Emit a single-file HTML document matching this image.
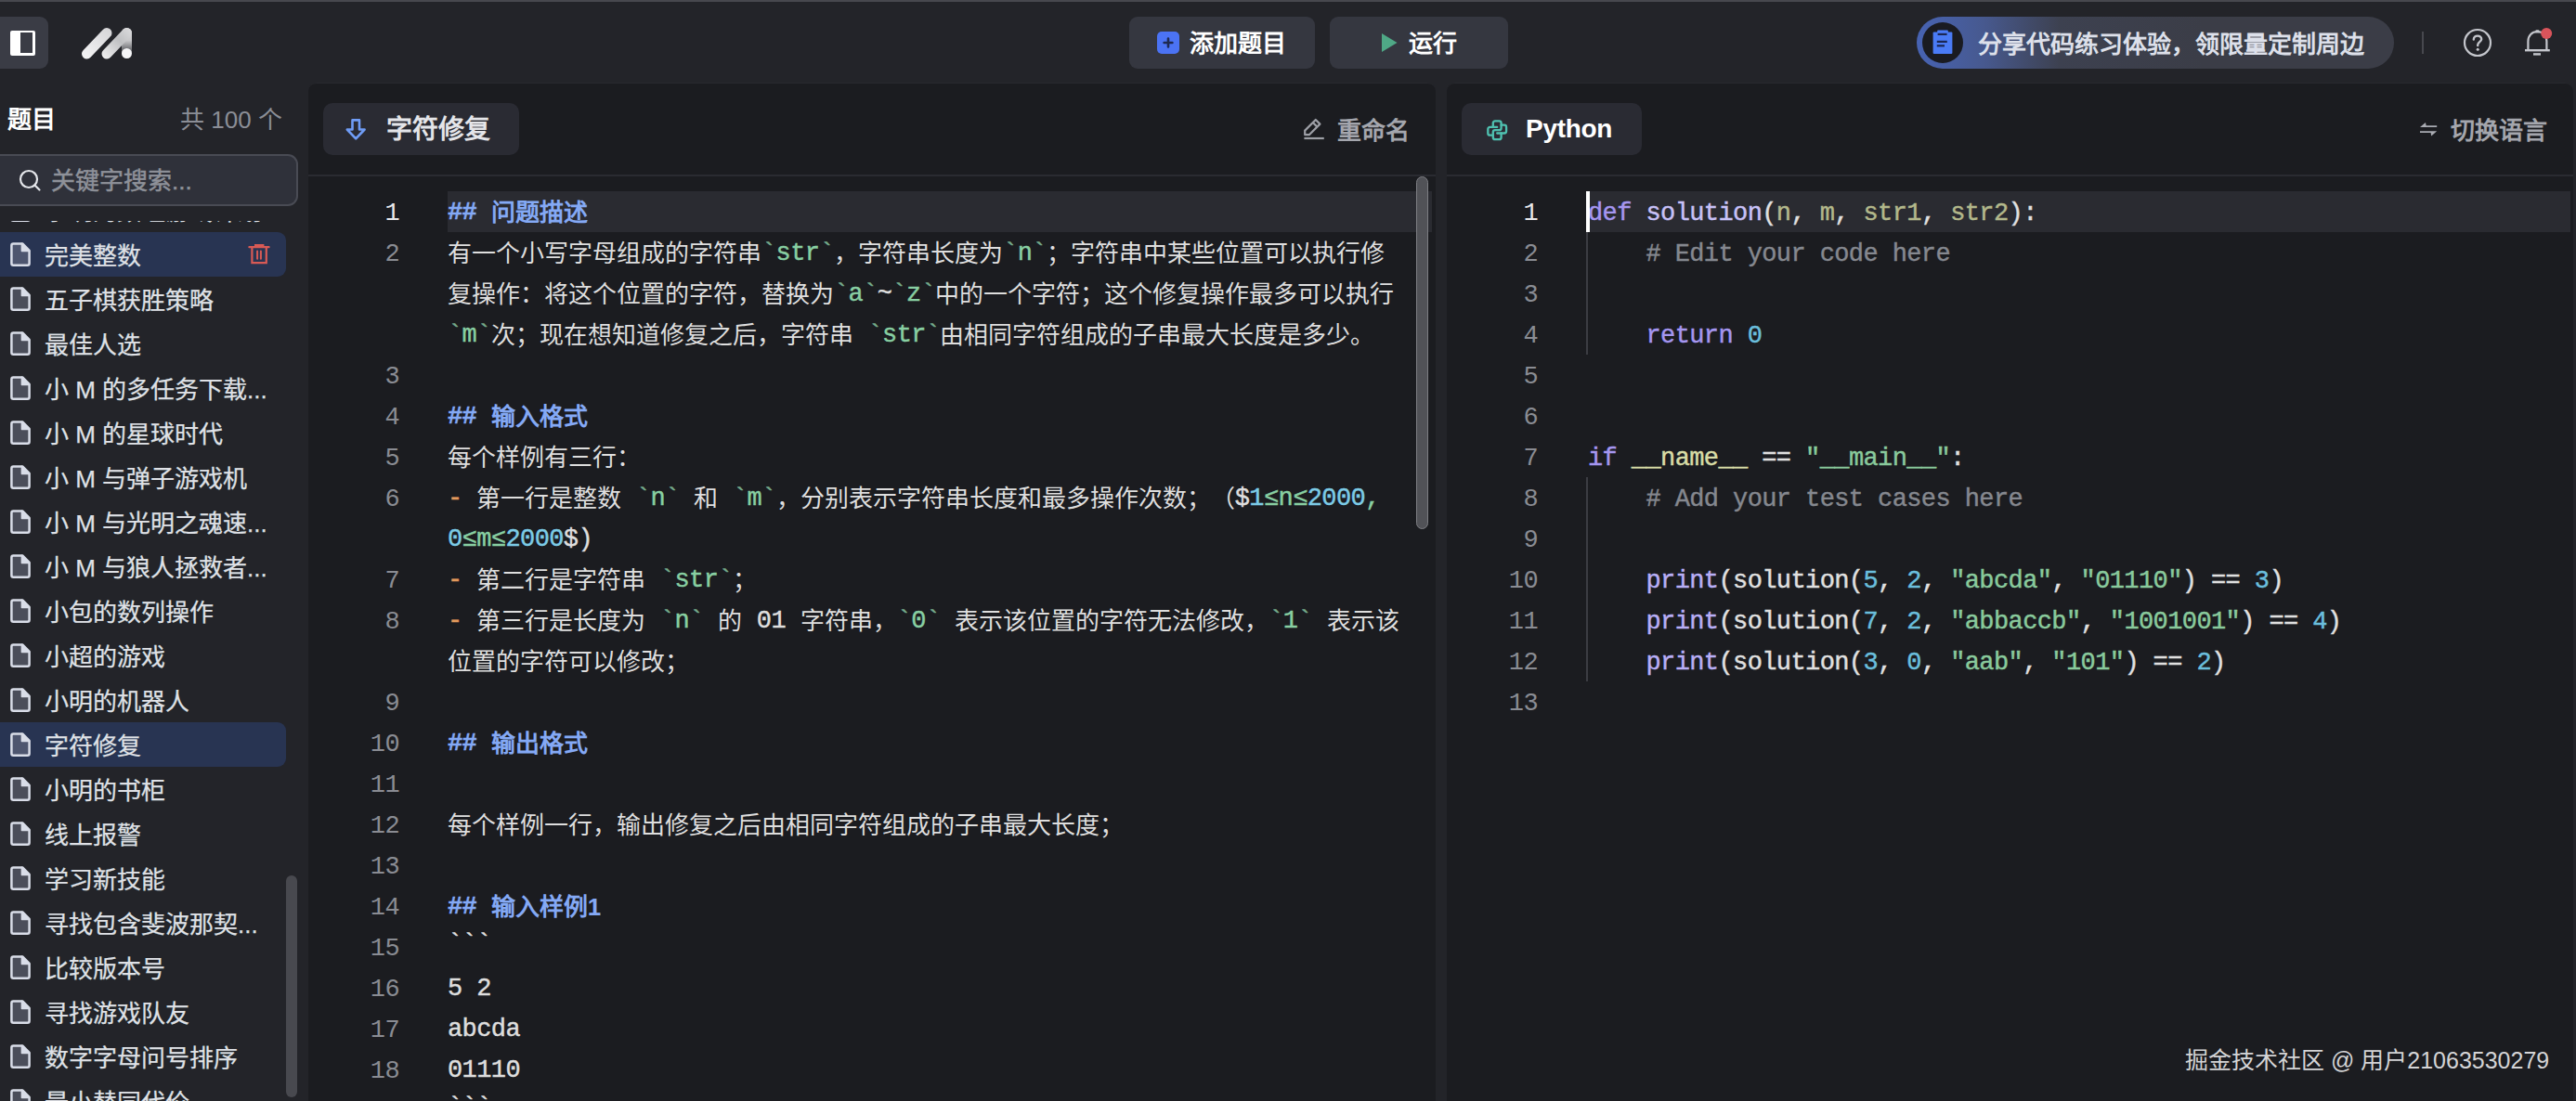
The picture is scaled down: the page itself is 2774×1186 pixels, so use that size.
<!DOCTYPE html>
<html lang="zh-CN"><head><meta charset="utf-8">
<style>
*{box-sizing:border-box;margin:0;padding:0}
html,body{width:2774px;height:1186px;overflow:hidden;background:#232429;font-family:"Liberation Sans",sans-serif;color:#e6e6e6;text-spacing-trim:space-all}
.a{position:absolute}
.topline{left:0;top:0;width:2774px;height:2px;background:#47484e}
.btn{background:#353740;border-radius:9px;height:56px;top:18px}
.btxt{font-size:26px;font-weight:700;color:#fff;line-height:56px;white-space:nowrap}
.panel{background:#1b1c20;top:89px;height:1100px;border-radius:9px 9px 0 0;border-top:1px solid #28292e}
.chip{background:#2a2b33;border-radius:10px;top:111px;height:56px}
.sep{height:2px;background:#2a2b31;top:188px}
.ln{font-family:"Liberation Mono",monospace;font-size:27px;letter-spacing:-0.6px;color:#8a8c93;text-align:right;line-height:44px;height:44px;padding-top:2px}
.row{line-height:44px;height:44px;white-space:pre;font-size:26px;color:#dedede;padding-top:1px}
.row .m{position:relative;top:-2px}
.row .m.fence{position:relative;top:-6px}
.m{font-family:"Liberation Mono",monospace;font-size:27px;letter-spacing:-0.6px;-webkit-text-stroke:0.45px currentColor}
.hd{color:#84a9f5;font-weight:700}
.cj{display:inline-block;white-space:pre}
.g{color:#88cfa2}
.bt{color:#74a98a}
.c{color:#7ccbe6}
.o{color:#e39a5c}
.item{left:0;width:308px;height:48px;line-height:48px;font-size:26px;color:#dfe1e6;white-space:nowrap}
.item .t{position:absolute;left:48px;top:2px;-webkit-text-stroke:0.25px currentColor}
.fi{position:absolute;left:11px;top:12px;width:22px;height:25px}
.code{font-family:"Liberation Mono",monospace;font-size:27px;letter-spacing:-0.6px;line-height:44px;height:44px;white-space:pre;color:#e0e0e0;padding-top:2px;-webkit-text-stroke:0.45px currentColor}
.kw{color:#a596f0}
.fn{color:#c8c1f7}
.pa{color:#b3b88b}
.cm{color:#85888f}
.st{color:#89ca9c}
.nu{color:#6abedc}
.dn{color:#d8dca6}
.bi{color:#b8aef6}
</style></head><body>
<div class="a topline"></div>

<!-- header -->
<div class="a" style="left:0;top:18px;width:52px;height:56px;background:#3a3c45;border-radius:0 9px 9px 0"></div>
<div class="a" style="left:11px;top:33px;width:27px;height:27px;background:#fff;border-radius:2px"></div>
<div class="a" style="left:22px;top:35px;width:13px;height:22px;background:#3a3c45"></div>

<svg class="a" style="left:84px;top:26px" width="64" height="42" viewBox="0 0 64 42">
  <defs>
    <linearGradient id="lg1" gradientUnits="userSpaceOnUse" x1="6" y1="36" x2="34" y2="6"><stop offset="0" stop-color="#f4f4f5"/><stop offset="1" stop-color="#d6d6d8"/></linearGradient>
    <linearGradient id="lg3" gradientUnits="userSpaceOnUse" x1="28" y1="36" x2="56" y2="6"><stop offset="0" stop-color="#eeeeef"/><stop offset="0.6" stop-color="#bfc0c2"/><stop offset="1" stop-color="#d9d9db"/></linearGradient>
    <linearGradient id="lg2" gradientUnits="userSpaceOnUse" x1="0" y1="4" x2="0" y2="34"><stop offset="0" stop-color="#dcdcde"/><stop offset="0.45" stop-color="#c8c8ca"/><stop offset="0.8" stop-color="#68696d"/><stop offset="1" stop-color="#4a4b50"/></linearGradient>
  </defs>
  <line x1="52.5" y1="9.5" x2="52.5" y2="31" stroke="url(#lg2)" stroke-width="11" stroke-linecap="round"/>
  <line x1="9.5" y1="32" x2="31" y2="9.5" stroke="url(#lg1)" stroke-width="11" stroke-linecap="round"/>
  <line x1="31" y1="32" x2="52.5" y2="9.5" stroke="url(#lg3)" stroke-width="11" stroke-linecap="round"/>
  <circle cx="52.5" cy="31.5" r="5.5" fill="#f6f6f8"/>
</svg>

<div class="a btn" style="left:1216px;width:200px"></div>
<div class="a" style="left:1246px;top:34px;width:24px;height:24px;background:#4b73f4;border-radius:5px"></div>
<svg class="a" style="left:1246px;top:34px" width="24" height="24" viewBox="0 0 24 24"><path d="M12 7.6 V16.4 M7.6 12 H16.4" stroke="#1e2a52" stroke-width="2.6" stroke-linecap="round"/></svg>
<div class="a btxt" style="left:1281px;top:19px">添加题目</div>

<div class="a btn" style="left:1432px;width:192px"></div>
<svg class="a" style="left:1487px;top:35px" width="19" height="22" viewBox="0 0 19 22"><path d="M1 1 L17.5 11 L1 21 Z" fill="#4fa886"/></svg>
<div class="a btxt" style="left:1517px;top:19px">运行</div>

<div class="a" style="left:2064px;top:18px;width:514px;height:56px;border-radius:28px;background:linear-gradient(90deg,#4763b3 0%,#47598f 14%,#3d4150 30%,#3b3d47 60%,#3b3d47 100%)"></div>
<div class="a" style="left:2070px;top:24px;width:44px;height:44px;border-radius:22px;background:#1a1b21"></div>
<svg class="a" style="left:2078px;top:30px" width="28" height="32" viewBox="0 0 28 32"><rect x="3.6" y="4.5" width="20.8" height="23.5" rx="1" fill="#4a7bf6"/><rect x="8.2" y="2.6" width="11.6" height="4" rx="0.8" fill="#4a7bf6"/><rect x="8.6" y="5.8" width="10" height="2.2" fill="#1b2754"/><rect x="7.8" y="13.8" width="11" height="2.2" fill="#1b2754"/><rect x="7.8" y="18.2" width="8.2" height="2.2" fill="#1b2754"/></svg>
<div class="a" style="left:2130px;top:20px;line-height:56px;font-size:26px;font-weight:700;color:#dde0ea;white-space:nowrap">分享代码练习体验，领限量定制周边</div>

<div class="a" style="left:2608px;top:34px;width:2px;height:24px;background:#47484e"></div>
<svg class="a" style="left:2650px;top:28px" width="36" height="36" viewBox="0 0 36 36"><circle cx="18" cy="18" r="14" fill="none" stroke="#c4c6cc" stroke-width="2.2"/><path d="M13.8 14.6 C13.8 12 15.6 10.6 18 10.6 C20.4 10.6 22.2 12.2 22.2 14.3 C22.2 16.9 18.2 17.4 18.2 20.2 V21" fill="none" stroke="#c4c6cc" stroke-width="2.4" stroke-linecap="round"/><circle cx="18.2" cy="25.2" r="1.5" fill="#c4c6cc"/></svg>
<svg class="a" style="left:2714px;top:26px" width="40" height="40" viewBox="0 0 40 40"><path d="M8.4 28 V18.5 C8.4 12 12.6 8.2 18.4 8.2 C24.2 8.2 28.4 12 28.4 18.5 V28" fill="none" stroke="#c4c6cc" stroke-width="2.2"/><rect x="16.4" y="6.2" width="4" height="3" rx="1" fill="#c4c6cc"/><rect x="5" y="27" width="26.8" height="2.4" fill="#c4c6cc"/><rect x="14" y="31.2" width="8" height="2.4" fill="#c4c6cc"/><circle cx="28.2" cy="10" r="6" fill="#d9545b"/></svg>

<!-- sidebar -->
<div class="a" style="left:8px;top:105px;line-height:48px;font-size:26px;font-weight:700;color:#fff">题目</div>
<div class="a" style="left:194px;top:105px;line-height:48px;font-size:26px;color:#8b8e96;white-space:pre">共 100 个</div>

<div id="list" class="a" style="left:0;top:238px;width:332px;height:948px;overflow:hidden">
<div class="a item" style="top:-36px;"><svg class="fi" style="left:0;top:0;width:40px;height:48px" viewBox="0 0 40 48"><path d="M12.4 14.4 Q12.4 12.4 14.4 12.4 H24.2 L31.6 19.8 V33.8 Q31.6 35.8 29.6 35.8 H14.4 Q12.4 35.8 12.4 33.8 Z" fill="#4b4e5a" stroke="#d9dde8" stroke-width="2.5" stroke-linejoin="round"/><path d="M23.4 12.4 V20.6 H31.6 Z" fill="#d9dde8" stroke="#d9dde8" stroke-width="1.5" stroke-linejoin="round"/></svg><span class="t">小明的数组游戏计划</span></div>
<div class="a item" style="top:12px;background:#283452;border-radius:0 9px 9px 0;"><svg class="fi" style="left:0;top:0;width:40px;height:48px" viewBox="0 0 40 48"><path d="M12.4 14.4 Q12.4 12.4 14.4 12.4 H24.2 L31.6 19.8 V33.8 Q31.6 35.8 29.6 35.8 H14.4 Q12.4 35.8 12.4 33.8 Z" fill="#4e566f" stroke="#d9dde8" stroke-width="2.5" stroke-linejoin="round"/><path d="M23.4 12.4 V20.6 H31.6 Z" fill="#d9dde8" stroke="#d9dde8" stroke-width="1.5" stroke-linejoin="round"/></svg><span class="t">完美整数</span><svg class="a" style="left:262px;top:8px" width="34" height="34" viewBox="0 0 34 34"><path d="M6.4 8.2 H27.6" stroke="#d85a55" stroke-width="2.2" stroke-linecap="round"/><path d="M13 8 V6 H21.4 V8" fill="none" stroke="#d85a55" stroke-width="2"/><path d="M9.4 8.2 V25.2 H24.8 V8.2" fill="none" stroke="#d85a55" stroke-width="2.2"/><path d="M15.1 12.5 V20.8 M18.9 12.5 V20.8" stroke="#d85a55" stroke-width="2" stroke-linecap="round"/></svg></div>
<div class="a item" style="top:60px;"><svg class="fi" style="left:0;top:0;width:40px;height:48px" viewBox="0 0 40 48"><path d="M12.4 14.4 Q12.4 12.4 14.4 12.4 H24.2 L31.6 19.8 V33.8 Q31.6 35.8 29.6 35.8 H14.4 Q12.4 35.8 12.4 33.8 Z" fill="#4b4e5a" stroke="#d9dde8" stroke-width="2.5" stroke-linejoin="round"/><path d="M23.4 12.4 V20.6 H31.6 Z" fill="#d9dde8" stroke="#d9dde8" stroke-width="1.5" stroke-linejoin="round"/></svg><span class="t">五子棋获胜策略</span></div>
<div class="a item" style="top:108px;"><svg class="fi" style="left:0;top:0;width:40px;height:48px" viewBox="0 0 40 48"><path d="M12.4 14.4 Q12.4 12.4 14.4 12.4 H24.2 L31.6 19.8 V33.8 Q31.6 35.8 29.6 35.8 H14.4 Q12.4 35.8 12.4 33.8 Z" fill="#4b4e5a" stroke="#d9dde8" stroke-width="2.5" stroke-linejoin="round"/><path d="M23.4 12.4 V20.6 H31.6 Z" fill="#d9dde8" stroke="#d9dde8" stroke-width="1.5" stroke-linejoin="round"/></svg><span class="t">最佳人选</span></div>
<div class="a item" style="top:156px;"><svg class="fi" style="left:0;top:0;width:40px;height:48px" viewBox="0 0 40 48"><path d="M12.4 14.4 Q12.4 12.4 14.4 12.4 H24.2 L31.6 19.8 V33.8 Q31.6 35.8 29.6 35.8 H14.4 Q12.4 35.8 12.4 33.8 Z" fill="#4b4e5a" stroke="#d9dde8" stroke-width="2.5" stroke-linejoin="round"/><path d="M23.4 12.4 V20.6 H31.6 Z" fill="#d9dde8" stroke="#d9dde8" stroke-width="1.5" stroke-linejoin="round"/></svg><span class="t">小 M 的多任务下载...</span></div>
<div class="a item" style="top:204px;"><svg class="fi" style="left:0;top:0;width:40px;height:48px" viewBox="0 0 40 48"><path d="M12.4 14.4 Q12.4 12.4 14.4 12.4 H24.2 L31.6 19.8 V33.8 Q31.6 35.8 29.6 35.8 H14.4 Q12.4 35.8 12.4 33.8 Z" fill="#4b4e5a" stroke="#d9dde8" stroke-width="2.5" stroke-linejoin="round"/><path d="M23.4 12.4 V20.6 H31.6 Z" fill="#d9dde8" stroke="#d9dde8" stroke-width="1.5" stroke-linejoin="round"/></svg><span class="t">小 M 的星球时代</span></div>
<div class="a item" style="top:252px;"><svg class="fi" style="left:0;top:0;width:40px;height:48px" viewBox="0 0 40 48"><path d="M12.4 14.4 Q12.4 12.4 14.4 12.4 H24.2 L31.6 19.8 V33.8 Q31.6 35.8 29.6 35.8 H14.4 Q12.4 35.8 12.4 33.8 Z" fill="#4b4e5a" stroke="#d9dde8" stroke-width="2.5" stroke-linejoin="round"/><path d="M23.4 12.4 V20.6 H31.6 Z" fill="#d9dde8" stroke="#d9dde8" stroke-width="1.5" stroke-linejoin="round"/></svg><span class="t">小 M 与弹子游戏机</span></div>
<div class="a item" style="top:300px;"><svg class="fi" style="left:0;top:0;width:40px;height:48px" viewBox="0 0 40 48"><path d="M12.4 14.4 Q12.4 12.4 14.4 12.4 H24.2 L31.6 19.8 V33.8 Q31.6 35.8 29.6 35.8 H14.4 Q12.4 35.8 12.4 33.8 Z" fill="#4b4e5a" stroke="#d9dde8" stroke-width="2.5" stroke-linejoin="round"/><path d="M23.4 12.4 V20.6 H31.6 Z" fill="#d9dde8" stroke="#d9dde8" stroke-width="1.5" stroke-linejoin="round"/></svg><span class="t">小 M 与光明之魂速...</span></div>
<div class="a item" style="top:348px;"><svg class="fi" style="left:0;top:0;width:40px;height:48px" viewBox="0 0 40 48"><path d="M12.4 14.4 Q12.4 12.4 14.4 12.4 H24.2 L31.6 19.8 V33.8 Q31.6 35.8 29.6 35.8 H14.4 Q12.4 35.8 12.4 33.8 Z" fill="#4b4e5a" stroke="#d9dde8" stroke-width="2.5" stroke-linejoin="round"/><path d="M23.4 12.4 V20.6 H31.6 Z" fill="#d9dde8" stroke="#d9dde8" stroke-width="1.5" stroke-linejoin="round"/></svg><span class="t">小 M 与狼人拯救者...</span></div>
<div class="a item" style="top:396px;"><svg class="fi" style="left:0;top:0;width:40px;height:48px" viewBox="0 0 40 48"><path d="M12.4 14.4 Q12.4 12.4 14.4 12.4 H24.2 L31.6 19.8 V33.8 Q31.6 35.8 29.6 35.8 H14.4 Q12.4 35.8 12.4 33.8 Z" fill="#4b4e5a" stroke="#d9dde8" stroke-width="2.5" stroke-linejoin="round"/><path d="M23.4 12.4 V20.6 H31.6 Z" fill="#d9dde8" stroke="#d9dde8" stroke-width="1.5" stroke-linejoin="round"/></svg><span class="t">小包的数列操作</span></div>
<div class="a item" style="top:444px;"><svg class="fi" style="left:0;top:0;width:40px;height:48px" viewBox="0 0 40 48"><path d="M12.4 14.4 Q12.4 12.4 14.4 12.4 H24.2 L31.6 19.8 V33.8 Q31.6 35.8 29.6 35.8 H14.4 Q12.4 35.8 12.4 33.8 Z" fill="#4b4e5a" stroke="#d9dde8" stroke-width="2.5" stroke-linejoin="round"/><path d="M23.4 12.4 V20.6 H31.6 Z" fill="#d9dde8" stroke="#d9dde8" stroke-width="1.5" stroke-linejoin="round"/></svg><span class="t">小超的游戏</span></div>
<div class="a item" style="top:492px;"><svg class="fi" style="left:0;top:0;width:40px;height:48px" viewBox="0 0 40 48"><path d="M12.4 14.4 Q12.4 12.4 14.4 12.4 H24.2 L31.6 19.8 V33.8 Q31.6 35.8 29.6 35.8 H14.4 Q12.4 35.8 12.4 33.8 Z" fill="#4b4e5a" stroke="#d9dde8" stroke-width="2.5" stroke-linejoin="round"/><path d="M23.4 12.4 V20.6 H31.6 Z" fill="#d9dde8" stroke="#d9dde8" stroke-width="1.5" stroke-linejoin="round"/></svg><span class="t">小明的机器人</span></div>
<div class="a item" style="top:540px;background:#283452;border-radius:0 9px 9px 0;"><svg class="fi" style="left:0;top:0;width:40px;height:48px" viewBox="0 0 40 48"><path d="M12.4 14.4 Q12.4 12.4 14.4 12.4 H24.2 L31.6 19.8 V33.8 Q31.6 35.8 29.6 35.8 H14.4 Q12.4 35.8 12.4 33.8 Z" fill="#4e566f" stroke="#d9dde8" stroke-width="2.5" stroke-linejoin="round"/><path d="M23.4 12.4 V20.6 H31.6 Z" fill="#d9dde8" stroke="#d9dde8" stroke-width="1.5" stroke-linejoin="round"/></svg><span class="t">字符修复</span></div>
<div class="a item" style="top:588px;"><svg class="fi" style="left:0;top:0;width:40px;height:48px" viewBox="0 0 40 48"><path d="M12.4 14.4 Q12.4 12.4 14.4 12.4 H24.2 L31.6 19.8 V33.8 Q31.6 35.8 29.6 35.8 H14.4 Q12.4 35.8 12.4 33.8 Z" fill="#4b4e5a" stroke="#d9dde8" stroke-width="2.5" stroke-linejoin="round"/><path d="M23.4 12.4 V20.6 H31.6 Z" fill="#d9dde8" stroke="#d9dde8" stroke-width="1.5" stroke-linejoin="round"/></svg><span class="t">小明的书柜</span></div>
<div class="a item" style="top:636px;"><svg class="fi" style="left:0;top:0;width:40px;height:48px" viewBox="0 0 40 48"><path d="M12.4 14.4 Q12.4 12.4 14.4 12.4 H24.2 L31.6 19.8 V33.8 Q31.6 35.8 29.6 35.8 H14.4 Q12.4 35.8 12.4 33.8 Z" fill="#4b4e5a" stroke="#d9dde8" stroke-width="2.5" stroke-linejoin="round"/><path d="M23.4 12.4 V20.6 H31.6 Z" fill="#d9dde8" stroke="#d9dde8" stroke-width="1.5" stroke-linejoin="round"/></svg><span class="t">线上报警</span></div>
<div class="a item" style="top:684px;"><svg class="fi" style="left:0;top:0;width:40px;height:48px" viewBox="0 0 40 48"><path d="M12.4 14.4 Q12.4 12.4 14.4 12.4 H24.2 L31.6 19.8 V33.8 Q31.6 35.8 29.6 35.8 H14.4 Q12.4 35.8 12.4 33.8 Z" fill="#4b4e5a" stroke="#d9dde8" stroke-width="2.5" stroke-linejoin="round"/><path d="M23.4 12.4 V20.6 H31.6 Z" fill="#d9dde8" stroke="#d9dde8" stroke-width="1.5" stroke-linejoin="round"/></svg><span class="t">学习新技能</span></div>
<div class="a item" style="top:732px;"><svg class="fi" style="left:0;top:0;width:40px;height:48px" viewBox="0 0 40 48"><path d="M12.4 14.4 Q12.4 12.4 14.4 12.4 H24.2 L31.6 19.8 V33.8 Q31.6 35.8 29.6 35.8 H14.4 Q12.4 35.8 12.4 33.8 Z" fill="#4b4e5a" stroke="#d9dde8" stroke-width="2.5" stroke-linejoin="round"/><path d="M23.4 12.4 V20.6 H31.6 Z" fill="#d9dde8" stroke="#d9dde8" stroke-width="1.5" stroke-linejoin="round"/></svg><span class="t">寻找包含斐波那契...</span></div>
<div class="a item" style="top:780px;"><svg class="fi" style="left:0;top:0;width:40px;height:48px" viewBox="0 0 40 48"><path d="M12.4 14.4 Q12.4 12.4 14.4 12.4 H24.2 L31.6 19.8 V33.8 Q31.6 35.8 29.6 35.8 H14.4 Q12.4 35.8 12.4 33.8 Z" fill="#4b4e5a" stroke="#d9dde8" stroke-width="2.5" stroke-linejoin="round"/><path d="M23.4 12.4 V20.6 H31.6 Z" fill="#d9dde8" stroke="#d9dde8" stroke-width="1.5" stroke-linejoin="round"/></svg><span class="t">比较版本号</span></div>
<div class="a item" style="top:828px;"><svg class="fi" style="left:0;top:0;width:40px;height:48px" viewBox="0 0 40 48"><path d="M12.4 14.4 Q12.4 12.4 14.4 12.4 H24.2 L31.6 19.8 V33.8 Q31.6 35.8 29.6 35.8 H14.4 Q12.4 35.8 12.4 33.8 Z" fill="#4b4e5a" stroke="#d9dde8" stroke-width="2.5" stroke-linejoin="round"/><path d="M23.4 12.4 V20.6 H31.6 Z" fill="#d9dde8" stroke="#d9dde8" stroke-width="1.5" stroke-linejoin="round"/></svg><span class="t">寻找游戏队友</span></div>
<div class="a item" style="top:876px;"><svg class="fi" style="left:0;top:0;width:40px;height:48px" viewBox="0 0 40 48"><path d="M12.4 14.4 Q12.4 12.4 14.4 12.4 H24.2 L31.6 19.8 V33.8 Q31.6 35.8 29.6 35.8 H14.4 Q12.4 35.8 12.4 33.8 Z" fill="#4b4e5a" stroke="#d9dde8" stroke-width="2.5" stroke-linejoin="round"/><path d="M23.4 12.4 V20.6 H31.6 Z" fill="#d9dde8" stroke="#d9dde8" stroke-width="1.5" stroke-linejoin="round"/></svg><span class="t">数字字母问号排序</span></div>
<div class="a item" style="top:924px;"><svg class="fi" style="left:0;top:0;width:40px;height:48px" viewBox="0 0 40 48"><path d="M12.4 14.4 Q12.4 12.4 14.4 12.4 H24.2 L31.6 19.8 V33.8 Q31.6 35.8 29.6 35.8 H14.4 Q12.4 35.8 12.4 33.8 Z" fill="#4b4e5a" stroke="#d9dde8" stroke-width="2.5" stroke-linejoin="round"/><path d="M23.4 12.4 V20.6 H31.6 Z" fill="#d9dde8" stroke="#d9dde8" stroke-width="1.5" stroke-linejoin="round"/></svg><span class="t">最小替同代价</span></div>
</div>

<div class="a" style="left:0;top:166px;width:321px;height:56px;background:#2f313a;border:2px solid #494b54;border-left:none;border-radius:0 11px 11px 0"></div>
<svg class="a" style="left:18px;top:180px" width="30" height="30" viewBox="0 0 30 30"><circle cx="13" cy="13" r="9" fill="none" stroke="#e4e6ea" stroke-width="2.2"/><path d="M19.5 19.5 L24.5 24.5" stroke="#e4e6ea" stroke-width="2.2" stroke-linecap="round"/></svg>
<div class="a" style="left:55px;top:167px;line-height:56px;font-size:26px;color:#8e9199;white-space:nowrap;-webkit-text-stroke:0.5px #8e9199">关键字搜索...</div>

<div class="a" style="left:308px;top:943px;width:12px;height:239px;border-radius:6px;background:#48494f"></div>

<!-- left panel -->
<div class="a panel" style="left:332px;width:1214px"></div>
<div class="a chip" style="left:348px;width:211px"></div>
<svg class="a" style="left:366px;top:122px" width="34" height="34" viewBox="0 0 34 34"><path d="M13.5 7.4 H21 V17.5 H26.6 L17.2 27.4 L7.8 17.5 H13.5 Z" fill="none" stroke="#6f9cf5" stroke-width="2.6" stroke-linejoin="round"/></svg>
<div class="a" style="left:416px;top:112px;line-height:56px;font-size:28px;font-weight:700;color:#e4e5e9">字符修复</div>
<svg class="a" style="left:1398px;top:122px" width="34" height="34" viewBox="0 0 34 34"><path d="M7.2 18.6 L18.8 7 L23.4 11.6 L11.8 23.2 H7.2 Z" fill="none" stroke="#9d9fa6" stroke-width="2.2" stroke-linejoin="round"/><path d="M15.8 10 L20.4 14.6" stroke="#9d9fa6" stroke-width="2.2"/><path d="M6.4 27 H27.8" stroke="#9d9fa6" stroke-width="2.2"/></svg>
<div class="a" style="left:1440px;top:113px;line-height:56px;font-size:26px;font-weight:700;color:#a4a6ad">重命名</div>
<div class="a sep" style="left:332px;width:1214px"></div>

<div class="a" style="left:482px;top:206px;width:1060px;height:44px;background:#2a2b31"></div>
<div id="lg" class="a" style="left:360px;top:206px;width:70px"><div class="a ln" style="top:0px;width:70px;color:#e8e8ea">1</div><div class="a ln" style="top:44px;width:70px">2</div><div class="a ln" style="top:176px;width:70px">3</div><div class="a ln" style="top:220px;width:70px">4</div><div class="a ln" style="top:264px;width:70px">5</div><div class="a ln" style="top:308px;width:70px">6</div><div class="a ln" style="top:396px;width:70px">7</div><div class="a ln" style="top:440px;width:70px">8</div><div class="a ln" style="top:528px;width:70px">9</div><div class="a ln" style="top:572px;width:70px">10</div><div class="a ln" style="top:616px;width:70px">11</div><div class="a ln" style="top:660px;width:70px">12</div><div class="a ln" style="top:704px;width:70px">13</div><div class="a ln" style="top:748px;width:70px">14</div><div class="a ln" style="top:792px;width:70px">15</div><div class="a ln" style="top:836px;width:70px">16</div><div class="a ln" style="top:880px;width:70px">17</div><div class="a ln" style="top:924px;width:70px">18</div><div class="a ln" style="top:968px;width:70px">19</div></div>
<div id="lt" class="a" style="left:482px;top:206px;width:1060px">
<div class="a row" style="top:0px"><span class="m hd">## </span><span class="cj hd" style="width:104px">问题描述</span></div>
<div class="a row" style="top:44px"><span class="cj " style="width:338px">有一个小写字母组成的字符串</span><span class="m bt">`</span><span class="m g">str</span><span class="m bt">`</span><span class="cj " style="width:182px">，字符串长度为</span><span class="m bt">`</span><span class="m g">n</span><span class="m bt">`</span><span class="cj " style="width:364px">；字符串中某些位置可以执行修</span></div>
<div class="a row" style="top:88px"><span class="cj " style="width:416px">复操作：将这个位置的字符，替换为</span><span class="m bt">`</span><span class="m g">a</span><span class="m bt">`</span><span class="m ">~</span><span class="m bt">`</span><span class="m g">z</span><span class="m bt">`</span><span class="cj " style="width:494px">中的一个字符；这个修复操作最多可以执行</span></div>
<div class="a row" style="top:132px"><span class="m bt">`</span><span class="m g">m</span><span class="m bt">`</span><span class="cj " style="width:390px">次；现在想知道修复之后，字符串</span><span class="m "> </span><span class="m bt">`</span><span class="m g">str</span><span class="m bt">`</span><span class="cj " style="width:468px">由相同字符组成的子串最大长度是多少。</span></div>
<div class="a row" style="top:220px"><span class="m hd">## </span><span class="cj hd" style="width:104px">输入格式</span></div>
<div class="a row" style="top:264px"><span class="cj " style="width:208px">每个样例有三行：</span></div>
<div class="a row" style="top:308px"><span class="m o">-</span><span class="m "> </span><span class="cj " style="width:156px">第一行是整数</span><span class="m "> </span><span class="m bt">`</span><span class="m g">n</span><span class="m bt">`</span><span class="m "> </span><span class="cj " style="width:26px">和</span><span class="m "> </span><span class="m bt">`</span><span class="m g">m</span><span class="m bt">`</span><span class="cj " style="width:494px">，分别表示字符串长度和最多操作次数；（</span><span class="m ">$</span><span class="m c">1</span><span class="m g">≤n≤</span><span class="m c">2000</span><span class="m g">,</span></div>
<div class="a row" style="top:352px"><span class="m c">0</span><span class="m g">≤m≤</span><span class="m c">2000</span><span class="m ">$)</span></div>
<div class="a row" style="top:396px"><span class="m o">-</span><span class="m "> </span><span class="cj " style="width:182px">第二行是字符串</span><span class="m "> </span><span class="m bt">`</span><span class="m g">str</span><span class="m bt">`</span><span class="cj " style="width:26px">；</span></div>
<div class="a row" style="top:440px"><span class="m o">-</span><span class="m "> </span><span class="cj " style="width:182px">第三行是长度为</span><span class="m "> </span><span class="m bt">`</span><span class="m g">n</span><span class="m bt">`</span><span class="m "> </span><span class="cj " style="width:26px">的</span><span class="m "> 01 </span><span class="cj " style="width:104px">字符串，</span><span class="m bt">`</span><span class="m g">0</span><span class="m bt">`</span><span class="m "> </span><span class="cj " style="width:338px">表示该位置的字符无法修改，</span><span class="m bt">`</span><span class="m g">1</span><span class="m bt">`</span><span class="m "> </span><span class="cj " style="width:78px">表示该</span></div>
<div class="a row" style="top:484px"><span class="cj " style="width:260px">位置的字符可以修改；</span></div>
<div class="a row" style="top:572px"><span class="m hd">## </span><span class="cj hd" style="width:104px">输出格式</span></div>
<div class="a row" style="top:660px"><span class="cj " style="width:728px">每个样例一行，输出修复之后由相同字符组成的子串最大长度；</span></div>
<div class="a row" style="top:748px"><span class="m hd">## </span><span class="cj hd" style="width:130px">输入样例1</span></div>
<div class="a row" style="top:792px"><span class="m fence">```</span></div>
<div class="a row" style="top:836px"><span class="m ">5 2</span></div>
<div class="a row" style="top:880px"><span class="m ">abcda</span></div>
<div class="a row" style="top:924px"><span class="m ">01110</span></div>
<div class="a row" style="top:968px"><span class="m fence">```</span></div>
</div>
<div class="a" style="left:1525px;top:190px;width:13px;height:380px;border-radius:7px;background:#515257;border:1.5px solid #7d7e83"></div>

<!-- right panel -->
<div class="a panel" style="left:1558px;width:1213px"></div>
<div class="a chip" style="left:1574px;width:194px"></div>
<svg class="a" style="left:1599px;top:126.5px" width="26.4" height="26.4" viewBox="0 0 24 24"><g fill="none" stroke="#4fc1b0" stroke-width="2.1" stroke-linecap="round" stroke-linejoin="round"><path d="M12 9h-7a2 2 0 0 0 -2 2v4a2 2 0 0 0 2 2h3"/><path d="M12 15h7a2 2 0 0 0 2 -2v-4a2 2 0 0 0 -2 -2h-3"/><path d="M8 9v-4a2 2 0 0 1 2 -2h4a2 2 0 0 1 2 2v5a2 2 0 0 1 -2 2h-4a2 2 0 0 0 -2 2v5a2 2 0 0 0 2 2h4a2 2 0 0 0 2 -2v-4"/></g></svg>
<div class="a" style="left:1643px;top:111px;line-height:56px;font-size:28px;font-weight:700;color:#fff;letter-spacing:-0.3px">Python</div>
<svg class="a" style="left:2598px;top:122px" width="34" height="34" viewBox="0 0 34 34"><path d="M8 15 L14 10 L14.6 13.3 H26.2 V15 Z" fill="#a9abb2"/><path d="M26.2 19.2 L20.2 24.4 L19.6 21 H8 V19.2 Z" fill="#a9abb2"/></svg>
<div class="a" style="left:2639px;top:113px;line-height:56px;font-size:26px;font-weight:700;color:#a4a6ad">切换语言</div>
<div class="a sep" style="left:1558px;width:1213px"></div>

<div class="a" style="left:1710px;top:206px;width:1058px;height:44px;background:#2a2b31"></div>
<div id="rg" class="a" style="left:1590px;top:206px;width:66px"><div class="a ln" style="top:0px;width:66px;color:#e8e8ea">1</div><div class="a ln" style="top:44px;width:66px">2</div><div class="a ln" style="top:88px;width:66px">3</div><div class="a ln" style="top:132px;width:66px">4</div><div class="a ln" style="top:176px;width:66px">5</div><div class="a ln" style="top:220px;width:66px">6</div><div class="a ln" style="top:264px;width:66px">7</div><div class="a ln" style="top:308px;width:66px">8</div><div class="a ln" style="top:352px;width:66px">9</div><div class="a ln" style="top:396px;width:66px">10</div><div class="a ln" style="top:440px;width:66px">11</div><div class="a ln" style="top:484px;width:66px">12</div><div class="a ln" style="top:528px;width:66px">13</div></div>
<div id="rt" class="a" style="left:1710px;top:206px;width:1058px">
<div class="a code" style="top:0px"><span class="kw">def</span> <span class="fn">solution</span>(<span class="pa">n</span>, <span class="pa">m</span>, <span class="pa">str1</span>, <span class="pa">str2</span>):</div>
<div class="a code" style="top:44px">    <span class="cm"># Edit your code here</span></div>
<div class="a code" style="top:132px">    <span class="kw">return</span> <span class="nu">0</span></div>
<div class="a code" style="top:264px"><span class="kw">if</span> <span class="dn">__name__</span> == <span class="st">&quot;__main__&quot;</span>:</div>
<div class="a code" style="top:308px">    <span class="cm"># Add your test cases here</span></div>
<div class="a code" style="top:396px">    <span class="bi">print</span>(solution(<span class="nu">5</span>, <span class="nu">2</span>, <span class="st">&quot;abcda&quot;</span>, <span class="st">&quot;01110&quot;</span>) == <span class="nu">3</span>)</div>
<div class="a code" style="top:440px">    <span class="bi">print</span>(solution(<span class="nu">7</span>, <span class="nu">2</span>, <span class="st">&quot;abbaccb&quot;</span>, <span class="st">&quot;1001001&quot;</span>) == <span class="nu">4</span>)</div>
<div class="a code" style="top:484px">    <span class="bi">print</span>(solution(<span class="nu">3</span>, <span class="nu">0</span>, <span class="st">&quot;aab&quot;</span>, <span class="st">&quot;101&quot;</span>) == <span class="nu">2</span>)</div>
</div>
<div class="a" style="left:1708px;top:250px;width:2px;height:132px;background:#3c3d43"></div>
<div class="a" style="left:1708px;top:514px;width:2px;height:220px;background:#3c3d43"></div>
<div class="a" style="left:1708px;top:206px;width:4px;height:44px;background:#fff"></div>

<div class="a" style="left:2353px;top:1120px;line-height:44px;font-size:25px;color:#d4d4d6;white-space:nowrap">掘金技术社区 @ 用户21063530279</div>
</body></html>
